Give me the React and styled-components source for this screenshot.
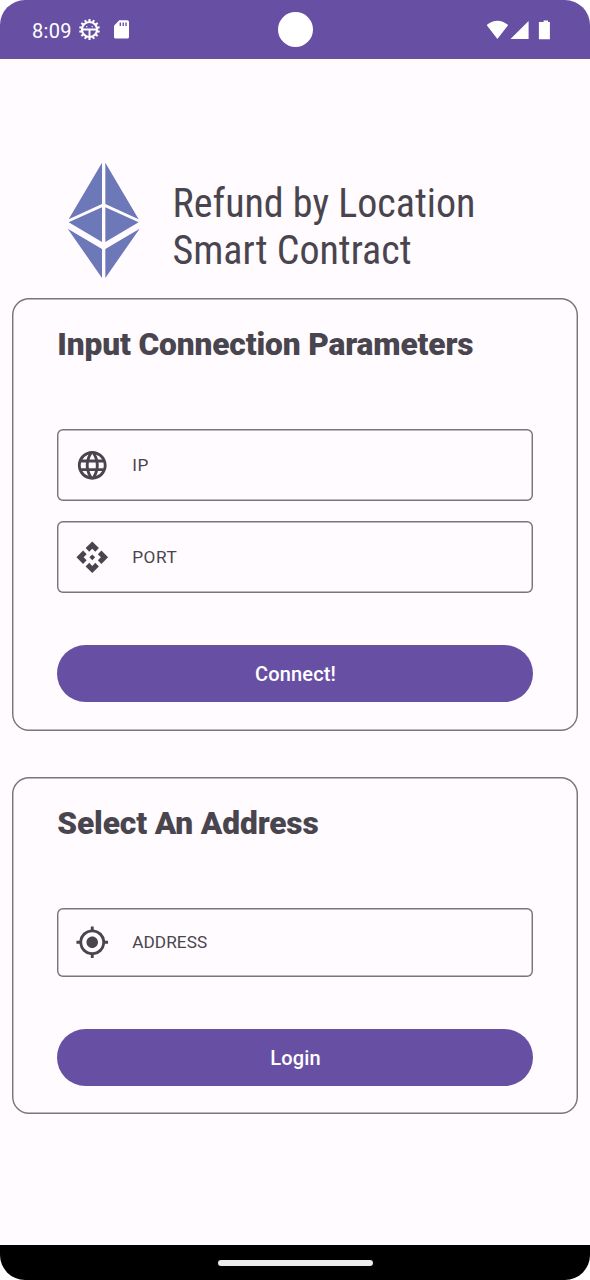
import React from "react";
import styled, { createGlobalStyle } from "styled-components";
import { MdLanguage, MdApi, MdMyLocation } from "react-icons/md";

const colors = {
  primary: "#6750a4",
  surface: "#fffbfe",
  text: "#49454f",
  outline: "#79747e",
};

const GlobalStyle = createGlobalStyle`
  *, *::before, *::after { box-sizing: border-box; }
  body { margin: 0; background: #fff; font-family: Roboto, sans-serif; }
`;

const Screen = styled.div`
  width: 590px;
  height: 1280px;
  display: flex;
  flex-direction: column;
  overflow: hidden;
  border-radius: 25px;
  background: ${colors.surface};
  color: ${colors.text};
`;

const StatusBar = styled.header`
  position: relative;
  flex: none;
  height: 59px;
  display: flex;
  align-items: center;
  padding: 0 39.5px 0 32px;
  background: ${colors.primary};
  color: #fff;
  svg { display: block; flex: none; }
`;

const Clock = styled.span`
  width: 47px;
  padding-top: 2px;
  font-size: 20px;
  line-height: 24px;
  font-weight: 380;
  letter-spacing: 0.3px;
`;

const SystemIcons = styled.div`
  display: flex;
  align-items: center;
  gap: ${(p) => p.$gap}px;
  margin-left: ${(p) => (p.$end ? "auto" : "0")};
`;

const Camera = styled.div`
  position: absolute;
  left: 277.5px;
  top: 12px;
  width: 35px;
  height: 35px;
  border-radius: 50%;
  background: #fff;
`;

const Content = styled.main`
  flex: 1;
  display: flex;
  flex-direction: column;
  padding: 103px 11.6px 0;
`;

const Brand = styled.div`
  display: flex;
  height: 136px;
  padding-left: 55.4px;
  svg { display: block; flex: none; }
`;

const Title = styled.h1`
  margin: 18px 0 0 32.2px;
  font-family: "Roboto Condensed", Roboto, sans-serif;
  font-stretch: 75%;
  font-weight: 400;
  font-size: 40px;
  line-height: 47px;
  white-space: nowrap;
`;

const Card = styled.section`
  height: ${(p) => p.$height}px;
  margin-bottom: 46px;
  padding: 28px 45.7px 0;
  border-radius: 17px;
  box-shadow: inset 0 0 0 1.45px ${colors.outline};
`;

const Heading = styled.h2`
  margin: 0 0 65px;
  font-weight: 860;
  font-size: 31.7px;
  line-height: 38px;
  letter-spacing: -0.14px;
  white-space: nowrap;
`;

const Field = styled.label`
  display: flex;
  align-items: center;
  height: ${(p) => p.$height}px;
  margin-bottom: ${(p) => p.$after}px;
  padding-left: 17.7px;
  border-radius: 6px;
  box-shadow: inset 0 0 0 1.45px ${colors.outline};
  font-size: 17.2px;
  letter-spacing: ${(p) => p.$tracking}px;
  svg { width: 34.5px; height: 34.5px; margin-right: 22.7px; }
`;

const FieldText = styled.span`
  padding-bottom: ${(p) => (p.$raised ? 2 : 0)}px;
`;

const Button = styled.button`
  display: block;
  width: 100%;
  height: 57px;
  padding: 1px 0 0 1px;
  border: 0;
  border-radius: 29px;
  background: ${colors.primary};
  color: #fff;
  font: 500 20px/24px Roboto, sans-serif;
  letter-spacing: 0.14px;
`;

const NavBar = styled.footer`
  flex: none;
  height: 35px;
  display: flex;
  justify-content: center;
  padding-top: 15px;
  background: #000;
`;

const NavHandle = styled.div`
  width: 155px;
  height: 6px;
  border-radius: 3px;
  background: #ececec;
`;

const EthereumLogo = () => (
  <svg width="73.33" height="116" viewBox="50 36 220 348" fill="#6c78b8">
    <path d="M155 38V162L55 208ZM165 38V162L265 208ZM155 172V276L55 217ZM165 172V276L265 217ZM52 236L155 297V384ZM268 236L165 297V384Z" />
  </svg>
);

const teeth = Array.from({ length: 14 }, (_, i) => (i * 360) / 14);

const DebugIcon = () => (
  <svg width="21" height="21" viewBox="0 0 20 20" fill="none" stroke="#fff">
    <circle cx="10" cy="10" r="7.2" strokeWidth="2" />
    {teeth.map((a) => (
      <path key={a} d="M10 2.5V0.1" strokeWidth="2" transform={`rotate(${a} 10 10)`} />
    ))}
    <path d="M3 10H17M10 10V17" strokeWidth="1.8" />
    <path d="M6.9 7.2H8M12 7.2H13.1" strokeWidth="1.1" />
  </svg>
);

const SdCardIcon = () => (
  <svg width="15" height="19" viewBox="0 0 15 19">
    <path fill="#fff" d="M5.2 0.3H13.3Q15 .3 15 2V17Q15 18.6 13.3 18.6H1.7Q0 18.6 0 17V5.7Z" />
    <path stroke={colors.primary} strokeWidth="1.4" d="M6.3 2.5V6M9.2 2.5V6M12 2.5V6" />
  </svg>
);

const App = () => (
  <>
    <GlobalStyle />
    <Screen>
      <StatusBar>
        <Clock>8:09</Clock>
        <SystemIcons $gap={14}>
          <DebugIcon />
          <SdCardIcon />
        </SystemIcons>
        <Camera />
        <SystemIcons $end $gap={0}>
          <svg width="64" height="20" viewBox="0 0 64 20" fill="#fff">
            <path d="M-.4 5Q10.4 -3.6 21.2 5L10.4 19ZM41.6 1V19H23.5ZM54.6 2H56.6V.5H61V2H62.9V19.2H51.9V2Z" />
          </svg>
        </SystemIcons>
      </StatusBar>
      <Content>
        <Brand>
          <EthereumLogo />
          <Title>
            Refund by Location
            <br />
            Smart Contract
          </Title>
        </Brand>
        <Card $height={433}>
          <Heading>Input Connection Parameters</Heading>
          <Field $height={72} $after={20} $tracking={0.6}>
            <MdLanguage />
            <FieldText>IP</FieldText>
          </Field>
          <Field $height={72} $after={52} $tracking={0.6}>
            <MdApi />
            <FieldText>PORT</FieldText>
          </Field>
          <Button>Connect!</Button>
        </Card>
        <Card $height={337}>
          <Heading>Select An Address</Heading>
          <Field $height={69} $after={52} $tracking={0.08}>
            <MdMyLocation />
            <FieldText $raised>ADDRESS</FieldText>
          </Field>
          <Button>Login</Button>
        </Card>
      </Content>
      <NavBar>
        <NavHandle />
      </NavBar>
    </Screen>
  </>
);

export default App;
